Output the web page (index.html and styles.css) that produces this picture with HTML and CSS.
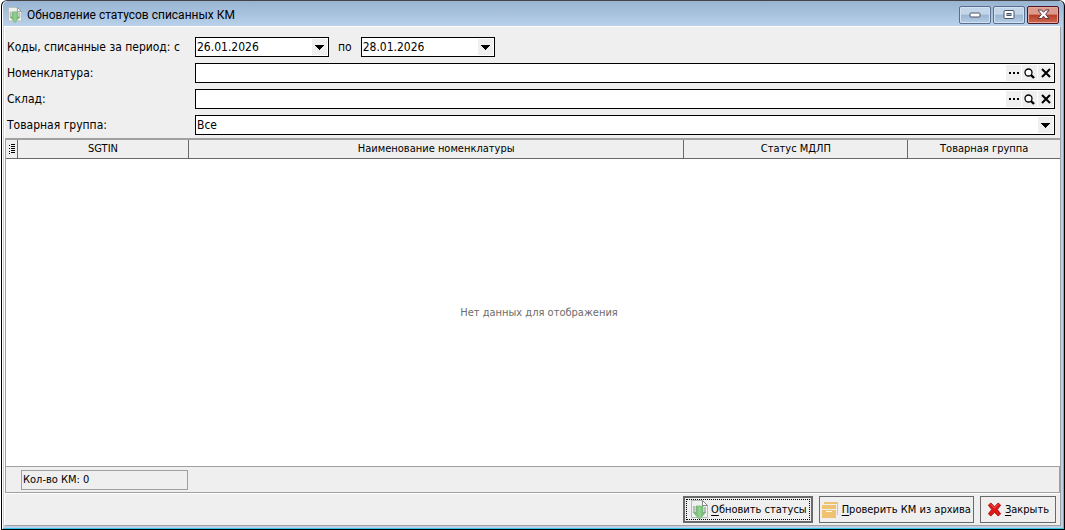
FILE: index.html
```html
<!DOCTYPE html>
<html lang="ru">
<head>
<meta charset="utf-8">
<title>Обновление статусов списанных КМ</title>
<link rel="stylesheet" href="styles.css">
</head>
<body>
<svg class="defs" width="0" height="0" aria-hidden="true">
  <defs>
    <linearGradient id="green" x1="0" x2="1"><stop offset="0" stop-color="#5fae62"/><stop offset=".5" stop-color="#97cf94"/><stop offset="1" stop-color="#5fae62"/></linearGradient>
    <symbol id="update" viewBox="0 0 17 20">
      <path d="M.5 .5H11.500L16.500 5.500V17.500H.5Z" fill="#eff1f0" stroke="#b4b9b6"/>
      <path d="M11.500 .5V5.500H16.500Z" fill="#fff" stroke="#85898a"/>
      <path d="M2 6h2v7H2zM13 7h2v6h-2z" fill="#b5bcb8"/>
      <path d="M5 6H12V12.500H14.500L8.500 19.500L2.500 12.500H5Z" fill="url(#green)" stroke="#69ab6b" stroke-width=".6"/>
    </symbol>
    <symbol id="down" viewBox="0 0 9 5"><path d="M0 0H9V1H8V2H7V3H6V4H5V5H4V4H3V3H2V2H1V1H0Z" shape-rendering="crispEdges"/></symbol>
    <symbol id="dots" viewBox="0 0 10 2"><path d="M0 0h2v2H0zM4 0h2v2H4zM8 0h2v2H8z"/></symbol>
    <symbol id="search" viewBox="0 0 11 11"><circle cx="4.500" cy="4.500" r="3.500" fill="#fff" stroke="#000" stroke-width="1.300"/><path d="M7 7L10 10" stroke="#000" stroke-width="2.400"/></symbol>
    <symbol id="clear" viewBox="0 0 10 10"><path d="M1 1L9 9M9 1L1 9" stroke="#000" stroke-width="2"/></symbol>
  </defs>
</svg>
<div class="window">
  <header class="titlebar">
    <svg class="title-icon"><use href="#update"/></svg>
    <h1 class="title">Обновление статусов списанных КМ</h1>
    <div class="window-buttons">
      <button class="win-btn" type="button" aria-label="Свернуть"><svg width="12" height="6" viewBox="0 0 12 6"><rect x="1" y="1" width="10" height="4" rx="1" fill="#fff" stroke="#4a5566"/></svg></button>
      <button class="win-btn" type="button" aria-label="Развернуть"><svg width="12" height="10" viewBox="0 0 12 10"><rect x="1" y=".5" width="10" height="8" rx="1" fill="#fff" stroke="#4a5566"/><rect x="4" y="3.500" width="4" height="2" fill="#9cb4d0" stroke="#4a5566"/></svg></button>
      <button class="win-btn win-close" type="button" aria-label="Закрыть окно"><svg width="13" height="11" viewBox="0 0 13 11"><path d="M1 1H4.500L6.500 3.300L8.500 1H12L8.700 5.300L12 9.500H8.500L6.500 7.200L4.500 9.500H1L4.300 5.300Z" fill="#fff" stroke="#5b3a45"/></svg></button>
    </div>
  </header>
  <main class="client">
    <form class="filters">
      <label for="from">Коды, списанные за период: с</label>
      <div class="period">
        <div class="field date"><input id="from" type="text" value="26.01.2026"><button class="tool" type="button" aria-label="Выбрать дату начала"><svg width="9" height="5"><use href="#down"/></svg></button></div>
        <label for="to">по</label>
        <div class="field date"><input id="to" type="text" value="28.01.2026"><button class="tool" type="button" aria-label="Выбрать дату окончания"><svg width="9" height="5"><use href="#down"/></svg></button></div>
      </div>
      <label for="item">Номенклатура:</label>
      <div class="field"><input id="item" type="text">
        <button class="tool" type="button" aria-label="Выбрать номенклатуру"><svg width="10" height="2"><use href="#dots"/></svg></button>
        <button class="tool" type="button" aria-label="Найти номенклатуру"><svg width="11" height="11"><use href="#search"/></svg></button>
        <button class="tool" type="button" aria-label="Очистить номенклатуру"><svg width="10" height="10"><use href="#clear"/></svg></button>
      </div>
      <label for="store">Склад:</label>
      <div class="field"><input id="store" type="text">
        <button class="tool" type="button" aria-label="Выбрать склад"><svg width="10" height="2"><use href="#dots"/></svg></button>
        <button class="tool" type="button" aria-label="Найти склад"><svg width="11" height="11"><use href="#search"/></svg></button>
        <button class="tool" type="button" aria-label="Очистить склад"><svg width="10" height="10"><use href="#clear"/></svg></button>
      </div>
      <label for="group">Товарная группа:</label>
      <div class="field"><select id="group"><option>Все</option></select><span class="tool" aria-hidden="true"><svg width="9" height="5"><use href="#down"/></svg></span></div>
    </form>
    <section class="grid">
      <table class="columns">
        <thead><tr>
          <th class="c-menu"><svg width="6" height="10" viewBox="0 0 6 10" shape-rendering="crispEdges"><path d="M2 0h4v1H2zM0 1h1v1H0zM2 2h4v1H2zM2 4h4v1H2zM0 4h1v1H0zM2 6h4v1H2zM0 7h1v1H0zM2 8h4v1H2zM0 9h1v1H0z"/></svg></th>
          <th class="c-sgtin">SGTIN</th>
          <th class="c-name">Наименование номенклатуры</th>
          <th class="c-status">Статус МДЛП</th>
          <th class="c-group">Товарная группа</th>
        </tr></thead>
      </table>
      <p class="empty">Нет данных для отображения</p>
      <div class="summary"><output class="count">Кол-во КМ: 0</output></div>
    </section>
    <footer class="actions">
      <button class="action default" type="button"><svg width="17" height="20"><use href="#update"/></svg><span><u>О</u>бновить статусы</span></button>
      <button class="action" type="button"><svg width="17" height="16" viewBox="0 0 17 16"><path d="M2 0H16V13H15V2H2ZM0 3H14V7H0ZM0 8H14V16H0Z" fill="#efc272"/><path d="M4 9.500H10" stroke="#fff8e8"/></svg><span><u>П</u>роверить КМ из архива</span></button>
      <button class="action close" type="button"><svg width="15" height="15" viewBox="0 0 16 16"><path d="M1.500 3.500L4 1L8 5L12 1L14.500 3.500L11 8L14.500 12.500L12 15L8 11L4 15L1.500 12.500L5 8Z" fill="#df1717" stroke="#b50d0d" stroke-linejoin="round"/><path d="M4 2.500L8 6.500L12 2.500" fill="none" stroke="#f36a5d"/></svg><span><u>З</u>акрыть</span></button>
    </footer>
  </main>
</div>
</body>
</html>
```
FILE: styles.css
```css
* { box-sizing: border-box; }
body {
  margin: 0;
  background: #fff;
  color: #000;
  font: 12px/16px "DejaVu Sans Condensed", "DejaVu Sans", sans-serif;
}
button, input, select { font: inherit; color: inherit; }
button { padding: 0; }
svg { display: block; flex: none; }
.defs { position: absolute; }
.window {
  display: flex;
  flex-direction: column;
  height: 100vh;
  margin-left: 1px;
  padding: 0 3px 3px 2px;
  background: #b9d1ea;
  border: 1px solid #000;
  border-top-color: #444;
  border-radius: 6px 6px 0 0;
  box-shadow: inset 1px 1px #fff, inset -1px -1px #35c5e5;
}
.titlebar {
  display: flex;
  align-items: center;
  height: 25px;
  margin: 0 -2px 0 -1px;
  padding: 2px 4px 0 5px;
  background: linear-gradient(#98b4d2, #b9d1ea);
  border-radius: 5px 5px 0 0;
}
.title-icon { width: 14px; height: 16px; }
.title {
  flex: 1;
  margin: 0 0 0 5px;
  font: 12px/16px Roboto, "Noto Sans", sans-serif;
}
.window-buttons { display: flex; gap: 2px; }
.win-btn {
  display: flex;
  align-items: center;
  justify-content: center;
  width: 32px;
  height: 18px;
  background: linear-gradient(#c3d5e8 45%, #9bb6d2 50%, #b5cce4);
  border: 1px solid #596e8c;
  border-radius: 2px;
  box-shadow: inset 0 0 0 1px #d3e2f1;
}
.win-close {
  background: linear-gradient(#dc9a8d 45%, #b83d25 50%, #cc6a50);
  border-color: #4d1622;
  box-shadow: inset 0 0 0 1px #e3a79c;
}
.client {
  display: flex;
  flex: 1;
  flex-direction: column;
  min-height: 0;
  background: #efefef;
  border: 1px solid #a0a0a0;
  border-top-color: #fff;
  border-left-color: #fff;
}
.filters {
  display: grid;
  grid-template-columns: 182px 1fr;
  gap: 6px;
  align-items: center;
  padding: 10px 5px 3px 2px;
}
.period { display: flex; align-items: center; gap: 9px; }
.field {
  display: flex;
  gap: 1px;
  height: 20px;
  padding: 1px;
  background: #fff;
  border: 1px solid #000;
}
.date { width: 134px; }
.field input, .field select {
  flex: 1;
  min-width: 0;
  padding: 0;
  background: transparent;
  border: 0;
  outline: 0;
  appearance: none;
}
.tool {
  display: flex;
  align-items: center;
  justify-content: center;
  width: 15px;
  background: #efefef;
  border: 0;
}
span.tool { pointer-events: none; }
.grid {
  display: flex;
  flex: 1;
  flex-direction: column;
  min-height: 0;
  background: #fff;
  border: 1px solid #a0a0a0;
  border-width: 2px 0 1px 1px;
}
.columns {
  width: 100%;
  table-layout: fixed;
  border-collapse: separate;
  border-spacing: 0;
  font-size: 11px;
}
.columns th {
  height: 19px;
  padding: 0;
  background: #efefef;
  border-right: 1px solid #696969;
  border-bottom: 1px solid #696969;
  font-weight: normal;
  line-height: 16px;
}
.columns th:last-child { border-right: 0; }
.c-menu { width: 12px; }
.c-menu svg { margin: 0 auto; }
.c-sgtin { width: 171px; }
.c-name { width: 47%; }
.c-status { width: 224px; }
.empty {
  display: flex;
  flex: 1;
  align-items: center;
  justify-content: center;
  margin: 0;
  padding-left: 12px;
  color: #6d6d6d;
  font-size: 11px;
}
.summary {
  padding: 3px 15px 2px;
  background: #efefef;
  border-top: 1px solid #a0a0a0;
  border-right: 1px solid #a0a0a0;
  font-size: 11px;
}
.count {
  display: block;
  width: 167px;
  padding: 1px;
  border: 1px solid #a0a0a0;
}
.actions {
  display: flex;
  justify-content: flex-end;
  gap: 6px;
  padding: 2px 4px;
  border-top: 1px solid #fff;
}
.action {
  display: flex;
  align-items: center;
  gap: 3px;
  height: 27px;
  padding: 0 2px;
  background: #efefef;
  border: 1px solid #696969;
  font-size: 11px;
}
.action u { text-underline-offset: 2px; }
.default {
  padding: 0 4px 0 6px;
  border-width: 2px;
  outline: 1px dotted #000;
  outline-offset: -4px;
}
.close { padding: 0 6px; }
```
